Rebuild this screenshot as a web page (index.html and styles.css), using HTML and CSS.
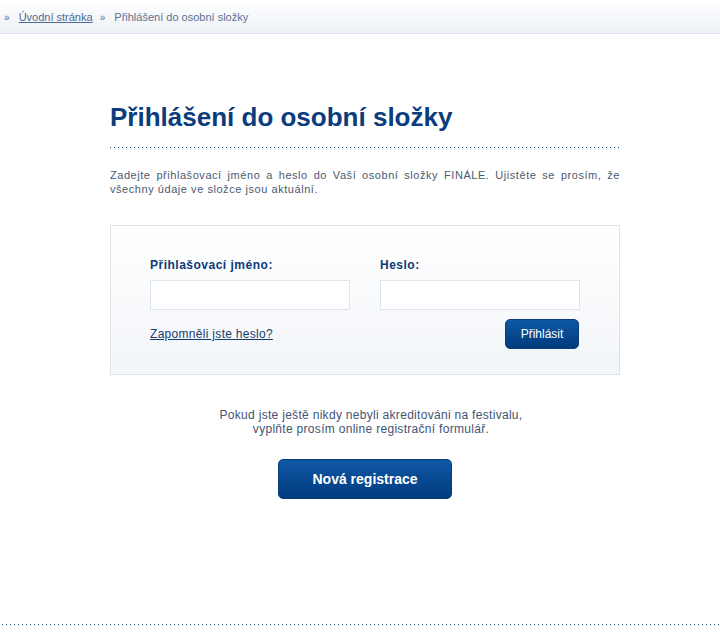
FILE: index.html
```html
<!DOCTYPE html>
<html lang="cs">
<head>
    <meta charset="UTF-8">
    <meta name="viewport" content="width=device-width, initial-scale=1.0">
    <title>Přihlášení do osobní složky</title>
    <link rel="stylesheet" href="styles.css">
</head>
<body>
    <div class="crumbs">
        <span class="raquo">&raquo;</span>
        <a href="#">Úvodní stránka</a>
        <span class="raquo">&raquo;</span>
        <span class="current">Přihlášení do osobní složky</span>
    </div>

    <div class="content">
        <h1>Přihlášení do osobní složky</h1>
        <div class="dots"></div>
        <p class="intro">Zadejte přihlašovací jméno a heslo do Vaší osobní složky FINÁLE. Ujistěte se prosím, že všechny údaje ve složce jsou aktuální.</p>

        <form class="login">
            <div class="fields">
                <label class="field">
                    <span>Přihlašovací jméno:</span>
                    <input type="text">
                </label>
                <label class="field">
                    <span>Heslo:</span>
                    <input type="password">
                </label>
            </div>
            <div class="actions">
                <a href="#" class="forgot">Zapomněli jste heslo?</a>
                <button type="button" class="btn btn-small">Přihlásit</button>
            </div>
        </form>

        <p class="register-note">Pokud jste ještě nikdy nebyli akreditováni na festivalu,<br>vyplňte prosím online registrační formulář.</p>
        <div class="register">
            <button type="button" class="btn btn-big">Nová registrace</button>
        </div>
    </div>

    <div class="footer-dots"></div>
</body>
</html>
```

FILE: styles.css
```css
body {
    margin: 0;
    font-family: "Liberation Sans", Arial, sans-serif;
    font-size: 11px;
    color: #4a5a70;
    background: #fff;
}

.crumbs {
    height: 34px;
    box-sizing: border-box;
    padding: 11px 0 0 4px;
    background: linear-gradient(to bottom, #ffffff, #edf1f6);
    border-bottom: 1px solid #dce4ee;
    color: #5d7190;
    font-size: 11px;
}

.crumbs a {
    color: #4f6a92;
    margin: 0 4px 0 6px;
}

.raquo {
    color: #4f6a92;
    font-size: 10px;
}

.crumbs .current {
    margin-left: 6px;
}

.content {
    width: 510px;
    margin: 0 auto 0 110px;
    padding-top: 68px;
    height: 556px;
    box-sizing: border-box;
}

h1 {
    margin: 0;
    font-size: 26px;
    line-height: 30px;
    font-weight: bold;
    color: #0b3c7d;
}

.dots {
    height: 1px;
    margin-top: 15px;
    background-image: linear-gradient(to right, #1d4c8a 1px, transparent 1px);
    background-size: 4px 1px;
}

.intro {
    margin: 20px 0 0;
    line-height: 14px;
    text-align: justify;
    font-size: 11px;
    letter-spacing: 0.55px;
}

.login {
    margin-top: 29px;
    height: 150px;
    box-sizing: border-box;
    border: 1px solid #dce4ee;
    background: linear-gradient(to bottom, #ffffff, #f2f5f9);
    padding: 32px 39px 0;
}

.fields {
    display: flex;
    gap: 30px;
}

.field {
    display: flex;
    flex-direction: column;
    width: 200px;
}

.field span {
    font-weight: bold;
    color: #0d3a75;
    font-size: 12px;
    line-height: 14px;
    letter-spacing: 0.5px;
    margin-bottom: 8px;
}

.field input {
    width: 200px;
    height: 30px;
    box-sizing: border-box;
    border: 1px solid #dce4ee;
    background: #fff;
    margin: 0;
}

.actions {
    display: flex;
    justify-content: space-between;
    align-items: center;
    margin-top: 9px;
}

.forgot {
    color: #163c6e;
    font-size: 12px;
    letter-spacing: 0.3px;
}

.btn {
    border: 1px solid #0a3c7a;
    color: #fff;
    font-family: "Liberation Sans", Arial, sans-serif;
    background: linear-gradient(to bottom, #0f58a6, #003b7d);
    cursor: pointer;
}

.btn-small {
    width: 74px;
    height: 30px;
    border-radius: 5px;
    font-size: 12px;
    margin-right: 1px;
}

.register-note {
    margin: 33px 0 0;
    text-align: center;
    font-size: 12px;
    line-height: 14px;
    letter-spacing: 0.3px;
    color: #3f5472;
    padding-left: 12px;
}

.register {
    text-align: center;
    margin-top: 23px;
}

.btn-big {
    width: 174px;
    height: 40px;
    border-radius: 5px;
    font-size: 14px;
    font-weight: bold;
}

.footer-dots {
    height: 1px;
    margin-top: 34px;
    background-image: linear-gradient(to right, #1d4c8a 1px, transparent 1px);
    background-size: 4px 1px;
    background-position: 2px 0;
}
```
